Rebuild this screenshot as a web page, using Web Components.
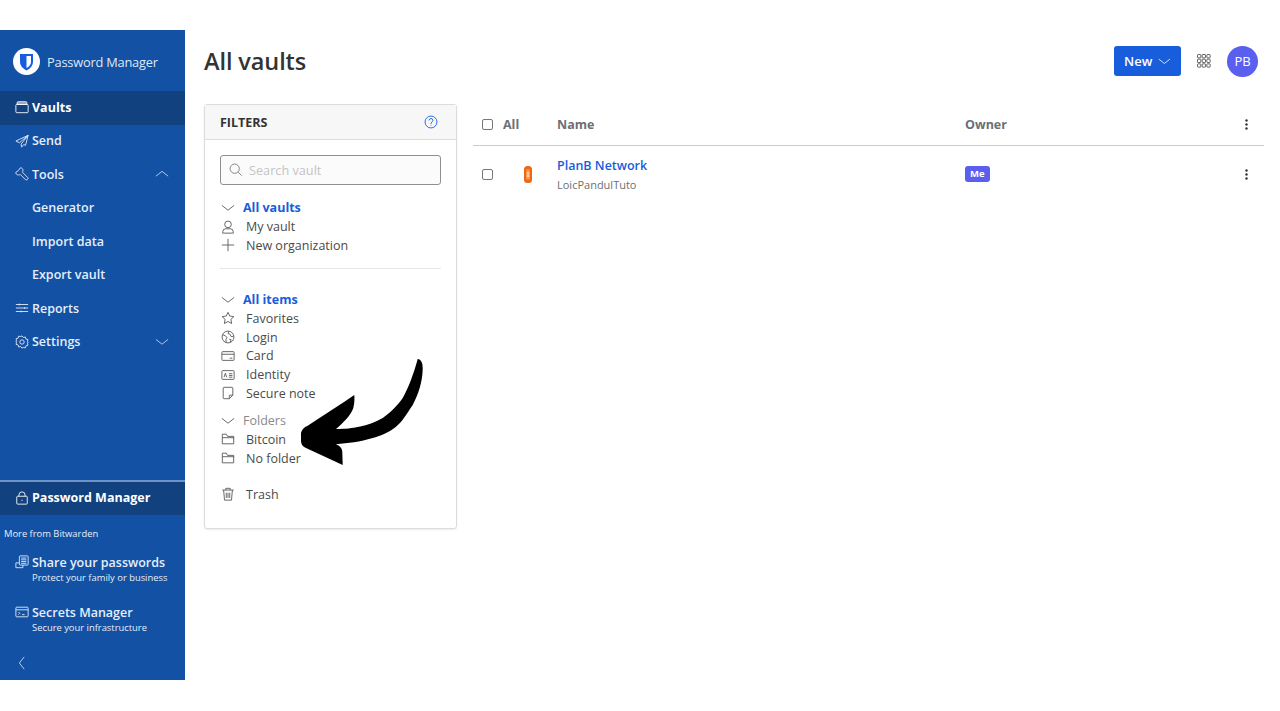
<!DOCTYPE html>
<html lang="en">
<head>
<meta charset="utf-8">
<title>All vaults</title>
<style>
  html, body { margin: 0; background: #fff; }
  body { font-family: "Open Sans", "Liberation Sans", sans-serif; color: #333; }
  vault-app { height: 711px; }
</style>
</head>
<body>
<vault-app></vault-app>

<script>
// stroke icons shared by the nav and the filters, all on a 16x16 box
const ICONS = {
  vault: '<rect x="1" y="5" width="14" height="9.500" rx="1"/><path d="M2.500 5V3q0-1 1-1h9q1 0 1 1v2z" fill="currentColor" fill-opacity=".45"/>',
  send: '<path d="M15 1.500 1 8l4 2 10-8.500L7 11.500 7.500 15l2.500-3 2 1z"/>',
  tools: '<path d="M6 1 4 4 1 6c-.5 2.500 2.500 4 5 2.500l6 6q1.200.700 2.200-.3t.3-2.200l-6-6C10 3.500 8.500.5 6 1z"/>',
  reports: '<path d="M1 4h14M1 8h14M1 12h14M5 3v2M11 7v2M7 11v2"/>',
  settings: '<circle cx="8" cy="8" r="2.500"/><path d="m8 1 1.500 1.800 2.300-.5.7 2.300 2.300.7-.5 2.300L15 8l-.7 1.400.5 2.300-2.300.7-.7 2.300-2.300-.5L8 15l-1.500-1.800-2.300.5-.7-2.300-2.300-.7.5-2.300L1 8l.7-1.400-.5-2.300 2.300-.7.7-2.300 2.300.5z"/>',
  lock: '<rect x="2" y="6" width="12" height="9" rx="1"/><path d="M4.500 6V4.500a3.500 3.500 0 0 1 7 0V6M8 10v1.500"/>',
  share: '<rect x="5" y="1" width="10" height="10.500" rx=".8"/><path d="M7 3.500h6M7 5.500h6M7 7.500h6M7 9.500h6M1 9h4M1 9v5.500h8v-3"/>',
  secrets: '<rect x="1" y="2.500" width="14" height="11" rx="1"/><path d="M1 5.500h14M4 8l1.500 1.500L4 11M8 11h3"/>',
  chevDown: '<path d="m1 5 7 5.500L15 5"/>',
  chevUp: '<path d="m1 10.500 7-5.500 7 5.500"/>',
  chevLeft: '<path d="M10.500 1 5 8l5.500 7"/>',
  search: '<circle cx="6.500" cy="6.500" r="5.300"/><path d="m10.500 10.500 4 4"/>',
  help: '<circle cx="8" cy="8" r="6.800"/><path d="M5.800 6.200Q6 4 8 4t2.200 2q0 1.200-1.200 2t-1 2.500M8 12v.6"/>',
  user: '<circle cx="8" cy="5" r="3.800"/><path d="M2 15v-1.500Q2 10 5.500 10h5q3.500 0 3.500 3.500V15z"/>',
  plus: '<path d="M8 1v14M1 8h14"/>',
  star: '<path d="m8 1.500 2 4.300 4.700.6-3.400 3.200.9 4.700L8 12l-4.200 2.300.9-4.700L1.300 6.400 6 5.800z"/>',
  globe: '<circle cx="8" cy="8" r="6.800"/><path d="M2 5.500 5 6.500 7 9 5.500 11 6 14.500M9 1.500 8 4l2.500 1 1 2.500L14 7.500M9.500 10.500l2 .5-1 3"/>',
  card: '<rect x="1" y="3" width="14" height="10" rx="1"/><path d="M1 6h14M10 10.500h3"/>',
  identity: '<rect x="1" y="3" width="14" height="10" rx=".8"/><path d="M3.500 10.500 5 6l1.500 4.500M9 6.500h4M9 8.500h4M9 10.500h4"/>',
  note: '<path d="M9.500 14.500H3.500a1 1 0 0 1-1-1v-11a1 1 0 0 1 1-1h9a1 1 0 0 1 1 1v8zM9.500 14.500V11q0-.500.5-.500h3.500"/>',
  folder: '<path d="M1.500 13.500v-11h4.500l1.500 2.500h7v8.500zM1.500 6.500h13.500"/>',
  trash: '<path d="M1.500 3.500h13M3 3.500l1 11.500h8l1-11.500M5.500 3.500V1.500h5v2M6 6.500v6M8 6.500v6M10 6.500v6"/>'
};

function icon(name, size) {
  return `<svg width="${size}" height="${size}" viewBox="0 0 16 16" fill="none" stroke="currentColor" stroke-width="1" aria-hidden="true">${ICONS[name]}</svg>`;
}

class NavItem extends HTMLElement {
  constructor() {
    super();
    this.attachShadow({ mode: 'open' });
  }

  connectedCallback() {
    const name = this.getAttribute('icon');
    const chev = this.getAttribute('chevron');
    this.shadowRoot.innerHTML = `
      <style>
        :host {
          display: flex;
          align-items: center;
          box-sizing: border-box;
          height: 33.500px;
          padding: 0 16px 1px 15px;
          font-size: 12.500px;
          font-weight: 600;
          color: #e6eefa;
        }
        :host([active]) { background: #11417f; color: #fff; font-weight: 700; }
        :host([sub]) { padding-left: 32px; }
        .ic { width: 17px; display: flex; flex: none; }
        .label { flex: 1; }
        .chev { display: flex; opacity: .85; }
      </style>
      ${name ? `<span class="ic">${icon(name, 14)}</span>` : ''}
      <span class="label"><slot></slot></span>
      ${chev ? `<span class="chev">${icon(chev, 14)}</span>` : ''}
    `;
  }
}

class PromoItem extends HTMLElement {
  constructor() {
    super();
    this.attachShadow({ mode: 'open' });
  }

  connectedCallback() {
    this.shadowRoot.innerHTML = `
      <style>
        :host {
          display: grid;
          grid-template-columns: 17px 1fr;
          padding-left: 15px;
          color: #e6eefa;
          height: 50px;
          align-content: start;
        }
        .ic { display: flex; align-items: center; height: 18px; }
        .title { font-size: 12.500px; font-weight: 600; line-height: 20px; margin-bottom: -2px; }
        .sub { grid-column: 2; font-size: 9.400px; line-height: 13px; white-space: nowrap; }
      </style>
      <span class="ic">${icon(this.getAttribute('icon'), 14)}</span>
      <span class="title">${this.getAttribute('title')}</span>
      <span class="sub"><slot></slot></span>
    `;
  }
}

class VaultSidebar extends HTMLElement {
  constructor() {
    super();
    this.attachShadow({ mode: 'open' });
  }

  connectedCallback() {
    this.shadowRoot.innerHTML = `
      <style>
        :host {
          display: flex;
          flex-direction: column;
          width: 185px;
          flex: none;
          background: #1251a3;
          color: #fff;
        }
        .brand {
          display: flex;
          align-items: center;
          gap: 7px;
          height: 61px;
          padding: 2px 0 0 13px;
          box-sizing: border-box;
          font-size: 12.800px;
          letter-spacing: -.2px;
          color: #dfe9f7;
        }
        .grow { flex: 1; }
        .product { border-top: 2px solid #6d94c8; height: 35px; padding-bottom: 2px; }
        .more { font-size: 9.400px; color: #e6eefa; padding: 12px 0 0 4px; line-height: 13px; margin-bottom: 13px; }
        .collapse { display: flex; padding: 3px 0 10px 15px; color: #cfdcf0; }
      </style>
      <div class="brand">
        <svg width="27" height="27" viewBox="0 0 27 27" aria-hidden="true">
          <circle cx="13.500" cy="13.500" r="13.500" fill="#fff"/>
          <path d="M7 6h13v8q0 5-6.500 8.500Q7 19 7 14z" fill="#175ddc"/>
          <path d="M13.500 8H18v6q0 3.500-4.500 6z" fill="#fff"/>
        </svg>
        <span>Password Manager</span>
      </div>
      <nav-item icon="vault" active>Vaults</nav-item>
      <nav-item icon="send">Send</nav-item>
      <nav-item icon="tools" chevron="chevUp">Tools</nav-item>
      <nav-item sub>Generator</nav-item>
      <nav-item sub>Import data</nav-item>
      <nav-item sub>Export vault</nav-item>
      <nav-item icon="reports">Reports</nav-item>
      <nav-item icon="settings" chevron="chevDown">Settings</nav-item>
      <div class="grow"></div>
      <nav-item class="product" icon="lock" active>Password Manager</nav-item>
      <div class="more">More from Bitwarden</div>
      <promo-item icon="share" title="Share your passwords">Protect your family or business</promo-item>
      <promo-item icon="secrets" title="Secrets Manager">Secure your infrastructure</promo-item>
      <div class="collapse">${icon('chevLeft', 14)}</div>
    `;
  }
}

class FilterItem extends HTMLElement {
  constructor() {
    super();
    this.attachShadow({ mode: 'open' });
  }

  connectedCallback() {
    this.shadowRoot.innerHTML = `
      <style>
        :host {
          display: flex;
          align-items: center;
          height: 18.750px;
          font-size: 12.500px;
          color: #4a4a4a;
          white-space: nowrap;
        }
        :host([head]) { color: #175ddc; font-weight: 700; }
        :host([muted]) { color: #8a8a8a; font-weight: 400; }
        .ic { display: flex; width: 25px; flex: none; padding-left: 1px; color: #555; }
        :host([head]) .ic { width: 22px; }
      </style>
      <span class="ic">${icon(this.getAttribute('icon'), 14)}</span>
      <slot></slot>
    `;
  }
}

class VaultFilters extends HTMLElement {
  constructor() {
    super();
    this.attachShadow({ mode: 'open' });
  }

  connectedCallback() {
    this.shadowRoot.innerHTML = `
      <style>
        :host {
          display: block;
          width: 253px;
          height: 425px;
          flex: none;
          box-sizing: border-box;
          border: 1px solid #dcdcdc;
          border-radius: 3px;
          box-shadow: 0 1px 2px rgba(0, 0, 0, .08);
        }
        .head {
          display: flex;
          align-items: center;
          justify-content: space-between;
          height: 34px;
          padding: 0 18px 0 15px;
          background: #f7f7f7;
          border-bottom: 1px solid #dcdcdc;
          font-size: 12.500px;
          font-weight: 700;
          color: #333;
        }
        .help { display: flex; color: #175ddc; }
        .body { padding: 15px 15px 0; }
        .search {
          display: flex;
          align-items: center;
          gap: 6px;
          height: 30px;
          box-sizing: border-box;
          padding-left: 8px;
          border: 1px solid #8f8f8f;
          border-radius: 3px;
          background: #fbfbfb;
          color: #777;
          font-size: 12.700px;
        }
        .search span { color: #c4c4c4; }
        .search svg { flex: none; }
        .list { margin-top: 13.400px; }
        hr { border: 0; border-top: 1px solid #e6e6e6; margin: 13px 0 21.500px; }
        .gap { height: 8.500px; }
        .gap-lg { height: 17.500px; }
      </style>
      <div class="head">
        <span>FILTERS</span>
        <span class="help">${icon('help', 14)}</span>
      </div>
      <div class="body">
        <div class="search">${icon('search', 14)}<span>Search vault</span></div>
        <div class="list">
          <filter-item head icon="chevDown">All vaults</filter-item>
          <filter-item icon="user">My vault</filter-item>
          <filter-item icon="plus">New organization</filter-item>
          <hr>
          <filter-item head icon="chevDown">All items</filter-item>
          <filter-item icon="star">Favorites</filter-item>
          <filter-item icon="globe">Login</filter-item>
          <filter-item icon="card">Card</filter-item>
          <filter-item icon="identity">Identity</filter-item>
          <filter-item icon="note">Secure note</filter-item>
          <div class="gap"></div>
          <filter-item head muted icon="chevDown">Folders</filter-item>
          <filter-item icon="folder">Bitcoin</filter-item>
          <filter-item icon="folder">No folder</filter-item>
          <div class="gap-lg"></div>
          <filter-item icon="trash">Trash</filter-item>
        </div>
      </div>
    `;
  }
}

class VaultTable extends HTMLElement {
  constructor() {
    super();
    this.attachShadow({ mode: 'open' });
  }

  connectedCallback() {
    const dots = '<svg width="3" height="11" viewBox="0 0 3 11" fill="#333"><circle cx="1.500" cy="1.500" r="1.200"/><circle cx="1.500" cy="5.500" r="1.200"/><circle cx="1.500" cy="9.500" r="1.200"/></svg>';
    this.shadowRoot.innerHTML = `
      <style>
        :host { display: block; flex: 1; min-width: 0; }
        .row {
          display: grid;
          grid-template-columns: 21px 54px 408px 1fr 19px;
          align-items: center;
          padding-left: 9px;
        }
        .top {
          height: 41px;
          margin-top: 0;
          border-bottom: 1px solid #c5c9dd;
          font-size: 12.500px;
          font-weight: 700;
          color: #6c6f73;
        }
        .item { height: 57px; }
        .check {
          display: block;
          width: 9px;
          height: 9px;
          border: 1px solid #777;
          border-radius: 2px;
          background: #fff;
        }
        .app { display: flex; padding-left: 21px; }
        .name { font-size: 12.500px; font-weight: 600; color: #175ddc; line-height: 18px; }
        .user { font-size: 11px; color: #6c6f73; line-height: 15px; margin-top: 2px; }
        .badge {
          display: inline-block;
          background: #5a5fee;
          color: #fff;
          font-size: 9.500px;
          font-weight: 700;
          line-height: 16px;
          padding: 0 5px;
          border-radius: 3px;
        }
        .badge-cell { display: flex; margin-top: -2px; }
        .menu { display: flex; }
      </style>
      <div class="row top">
        <span class="check"></span>
        <span>All</span>
        <span>Name</span>
        <span>Owner</span>
        <span class="menu">${dots}</span>
      </div>
      <div class="row item">
        <span class="check"></span>
        <span class="app">
          <svg width="8" height="17" viewBox="0 0 8 17" aria-hidden="true">
            <rect width="8" height="17" rx="3.500" fill="#f0660f"/>
            <rect x="2" y="3" width="4" height="11" rx="1" fill="#fb8a3c"/>
            <path d="M3 6h2v2H3zM3 9h2v2H3z" fill="none" stroke="#ffe1c9" stroke-width=".8"/>
          </svg>
        </span>
        <div>
          <div class="name">PlanB Network</div>
          <div class="user">LoicPandulTuto</div>
        </div>
        <span class="badge-cell"><span class="badge">Me</span></span>
        <span class="menu">${dots}</span>
      </div>
    `;
  }
}

class VaultHeader extends HTMLElement {
  constructor() {
    super();
    this.attachShadow({ mode: 'open' });
  }

  connectedCallback() {
    let apps = '';
    for (let y = 0; y < 3; y++) {
      for (let x = 0; x < 3; x++) {
        apps += `<rect x="${0.5 + x * 4.500}" y="${0.5 + y * 4.500}" width="3.200" height="3.200" rx=".6"/>`;
      }
    }
    this.shadowRoot.innerHTML = `
      <style>
        :host {
          display: flex;
          align-items: center;
          height: 62px;
          padding-right: 22px;
        }
        h1 { flex: 1; margin: 0; font-size: 23.500px; font-weight: 600; color: #333; letter-spacing: -.1px; }
        .new {
          display: flex;
          align-items: center;
          gap: 6px;
          height: 30px;
          padding: 0 10px;
          box-sizing: border-box;
          width: 67px;
          background: #175ddc;
          border-radius: 3px;
          color: #fff;
          font-size: 13px;
          font-weight: 600;
        }
        .apps { display: flex; margin-left: 16px; }
        .avatar {
          display: flex;
          align-items: center;
          justify-content: center;
          width: 31px;
          height: 31px;
          margin-left: 16px;
          border-radius: 50%;
          background: #5a5fee;
          color: #fff;
          font-size: 13px;
        }
      </style>
      <h1>All vaults</h1>
      <div class="new"><span>New</span>${icon('chevDown', 13)}</div>
      <span class="apps"><svg width="14" height="14" viewBox="0 0 13.500 13.500" fill="none" stroke="#555" stroke-width=".9" aria-hidden="true">${apps}</svg></span>
      <div class="avatar">PB</div>
    `;
  }
}

class CalloutArrow extends HTMLElement {
  constructor() {
    super();
    this.attachShadow({ mode: 'open' });
  }

  connectedCallback() {
    // the arrow lies over the filter panel, its box starts at 296,355 of the page
    this.shadowRoot.innerHTML = `
      <style>
        :host { position: absolute; left: 296px; top: 355px; width: 132px; height: 115px; pointer-events: none; }
        svg { display: block; }
      </style>
      <svg width="132" height="115" viewBox="0 0 132 115" aria-hidden="true">
        <path fill="#000" d="M121.700 4C125.500 4.500 127 9 126.700 14C126.500 27 122 40 116.700 50C110 60 106 67 100 71.700C92 78 84 81 76.700 83C64 87 52 88 40 89.300C44 91 46 93 46.300 97L46.700 110L10 93Q5 91 5 86L5 78Q6 73 11.700 70.700C28 60 44 50 58.300 40C58.800 46 58 50 57.300 53C55 60 47 68 40 74C50 74 56 73 63 71.700C72 70 80 67 86.700 63C95 57 101 51 106.700 43C112 34 118 18 121.700 4Z"/>
      </svg>
    `;
  }
}

class VaultApp extends HTMLElement {
  constructor() {
    super();
    this.attachShadow({ mode: 'open' });
  }

  connectedCallback() {
    this.shadowRoot.innerHTML = `
      <style>
        :host { display: block; position: relative; padding-top: 30px; box-sizing: border-box; }
        .frame { display: flex; height: 650px; overflow: hidden; }
        main { flex: 1; min-width: 0; padding: 0 0 0 19px; }
        .content { display: flex; gap: 16px; margin-top: 12px; padding-right: 16px; }
      </style>
      <div class="frame">
        <vault-sidebar></vault-sidebar>
        <main>
          <vault-header></vault-header>
          <div class="content">
            <vault-filters></vault-filters>
            <vault-table></vault-table>
          </div>
        </main>
      </div>
      <callout-arrow></callout-arrow>
    `;
  }
}

customElements.define('nav-item', NavItem);
customElements.define('promo-item', PromoItem);
customElements.define('vault-sidebar', VaultSidebar);
customElements.define('filter-item', FilterItem);
customElements.define('vault-filters', VaultFilters);
customElements.define('vault-table', VaultTable);
customElements.define('vault-header', VaultHeader);
customElements.define('callout-arrow', CalloutArrow);
customElements.define('vault-app', VaultApp);
</script>
</body>
</html>
